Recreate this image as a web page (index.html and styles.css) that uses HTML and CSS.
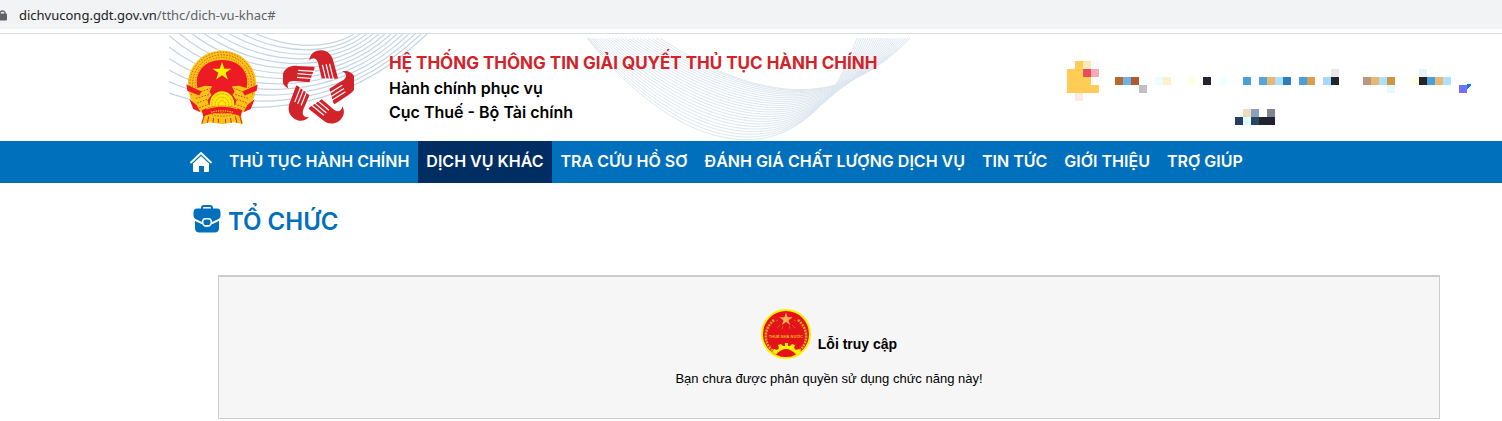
FILE: index.html
```html
<!DOCTYPE html>
<html lang="vi">
<head>
<meta charset="utf-8">
<meta name="viewport" content="width=device-width, initial-scale=1">
<title>Dịch vụ khác</title>
<link rel="stylesheet" href="styles.css">
</head>
<body>
<div class="address-bar">
  <svg class="lock" viewBox="0 0 8 12" aria-hidden="true"><path d="M0 5V3.500A2.800 2.800 0 0 1 5 3.500V5" fill="none" stroke="#5f6368" stroke-width="1.400"/><rect x="-3" y="4.500" width="10" height="7" rx="1" fill="#5f6368"/></svg>
  <span class="url"><span class="url-host">dichvucong.gdt.gov.vn</span>/tthc/dich-vu-khac#</span>
</div>

<header class="header">
  <svg class="waves" viewBox="0 0 745 107" aria-hidden="true">
    <g id="waves-left" fill="none" stroke="#c3d5e5" stroke-width="1.200"></g>
    <svg y="4" width="745" height="103" viewBox="0 4 745 103"><g id="waves-right" fill="none" stroke="#dde7f0" stroke-width="1"></g></svg>
  </svg>

  <svg class="emblem" viewBox="0 0 218 226" role="img" aria-label="Quốc huy Việt Nam">
    <path d="M60 170 46 224l28-6 35 6 36-6 28 6-14-54z" fill="#f6c515"/>
    <path d="M57 192l-9 30M70 194l-5 26M84 198l-2 22M98 200v20M120 200v20M134 198l3 22M148 194l6 26M161 192l8 30" stroke="#e8222b" stroke-width="3"/>
    <circle cx="109" cy="105" r="104" fill="#f7c516"/>
    <circle cx="109" cy="103" r="97" fill="none" stroke="#e4461f" stroke-width="3" stroke-dasharray="4 5"/>
    <circle cx="109" cy="103" r="89" fill="none" stroke="#e4461f" stroke-width="3" stroke-dasharray="5 4"/>
    <circle cx="109" cy="103" r="81" fill="none" stroke="#e4461f" stroke-width="3" stroke-dasharray="3 5"/>
    <path d="M37 122C20 70 55 30 109 30s89 40 72 92l-20 45H57z" fill="#ed1c24"/>
    <path d="M109 36l7 20h21l-17 12 7 21-18-13-18 13 7-21-18-12h22z" fill="#fff200"/>
    <path d="M18 120l40-12 21 1-8 16 6 11-12 16 6 20-33 12L20 156zM200 120l-40-12-21 1 8 16-6 11 12 16-6 20 33 12 18-28z" fill="#f7c516"/>
    <path d="M28 132l44-16M30 146l40-12M34 160l32-12M40 174l28-10M190 132l-44-16M188 146l-40-12M184 160l-32-12M178 174l-28-10" stroke="#e4461f" stroke-width="3" stroke-dasharray="5 4"/>
    <path d="M1 104l46 21-7 12-36-14zM217 104l-46 21 7 12 36-14zM10 148l22 18 12 22-22-10zM208 148l-22 18-12 22 22-10z" fill="#ed1c24"/>
    <path d="M72 170c-3-30 17-46 37-46s40 16 37 46z" fill="#ffe80a"/>
    <path d="M79 170c-2-25 13-38 30-38s32 13 30 38M88 170c-1-18 9-28 21-28s22 10 21 28M97 170c0-11 5-17 12-17s12 6 12 17" fill="none" stroke="#eda515" stroke-width="3" stroke-dasharray="6 2"/>
    <path d="M48 182c40-18 82-18 122 0l-4 18c-38-14-76-14-114 0z" fill="#ed1c24"/>
    <path d="M62 178c32-11 62-11 94 0" fill="none" stroke="#f7c516" stroke-width="3"/>
    <path d="M76 188c22-6 44-6 66 0" fill="none" stroke="#f7c516" stroke-width="4" stroke-dasharray="4 3"/>
  </svg>

  <svg class="hands" viewBox="25 16 209 224" role="img" aria-label="Biểu tượng năm bàn tay">
    <defs>
      <g id="hand">
        <path d="M102 47C104 28 119 16 138 17c20 1 32 15 36 34l13 48-5 2-43-2-8-33c-2-14-6-24-15-26-6 0-10 2-14 7z" fill="#d2232a"/>
        <path d="M152 104l-11-44M163 104l-11-46M174 104l-12-47" stroke="#fff" stroke-width="3.500"/>
      </g>
    </defs>
    <use href="#hand"/>
    <use href="#hand" transform="rotate(72 129 130)"/>
    <use href="#hand" transform="rotate(144 129 130)"/>
    <use href="#hand" transform="rotate(216 129 130)"/>
    <use href="#hand" transform="rotate(288 129 130)"/>
  </svg>

  <div class="titles">
    <h1 class="system-name">HỆ THỐNG THÔNG TIN GIẢI QUYẾT THỦ TỤC HÀNH CHÍNH</h1>
    <p class="agency">Hành chính phục vụ</p>
    <p class="agency">Cục Thuế - Bộ Tài chính</p>
  </div>

  <svg class="account" viewBox="0 0 404 64" shape-rendering="crispEdges" aria-hidden="true">
    <g id="account-mosaic"></g>
    <path d="M400 23h4v2h-1v1h-1v1h-1v1h-1z" fill="#0878ff"/>
  </svg>
</header>

<nav class="nav" aria-label="Menu chính">
  <a class="nav-home" href="#" aria-label="Trang chủ">
    <svg viewBox="0 0 22 22" aria-hidden="true"><path d="M1 11.500 11 2l10 9.500" fill="none" stroke="#fff" stroke-width="1.800" stroke-linecap="round" stroke-linejoin="round"/><path d="M3 12.500 11 5l8 7.500V20q0 1-1 1h-4v-6H9v6H4q-1 0-1-1z" fill="#fff"/></svg>
  </a>
  <a class="nav-link" href="#">THỦ TỤC HÀNH CHÍNH</a>
  <a class="nav-link nav-link-active" href="#" aria-current="page">DỊCH VỤ KHÁC</a>
  <a class="nav-link" href="#">TRA CỨU HỒ SƠ</a>
  <a class="nav-link" href="#">ĐÁNH GIÁ CHẤT LƯỢNG DỊCH VỤ</a>
  <a class="nav-link" href="#">TIN TỨC</a>
  <a class="nav-link" href="#">GIỚI THIỆU</a>
  <a class="nav-link" href="#">TRỢ GIÚP</a>
</nav>

<main class="content">
  <div class="section-head">
    <svg class="briefcase" viewBox="0 0 28 28" aria-hidden="true">
      <path d="M9 4V3q0-2 2-2h6q2 0 2 2v1" fill="none" stroke="#0070bd" stroke-width="2"/>
      <path d="M4 3.500h20q3.500 0 3.500 4V11q0 2-2 3l-6.500 3q0-4-3-4h-4q-3 0-3 4L2.500 14q-2-1-2-3V7.500q0-4 3.500-4z" fill="#0070bd"/>
      <path d="M2 16l7.500 3.500Q10.500 22 14 22t4.500-2.500L26 16v7q0 4.500-4.500 4.500h-15Q2 27.500 2 23z" fill="#0070bd"/>
      <rect x="10.500" y="14.500" width="7" height="5.500" rx="2" fill="#0070bd"/>
    </svg>
    <h2 class="section-title">TỔ CHỨC</h2>
  </div>

  <section class="panel">
    <div class="error-head">
      <svg class="seal" viewBox="0 0 50 50" role="img" aria-label="Thuế Nhà nước">
        <circle cx="25" cy="25" r="24" fill="#e3121b" stroke="#fff200" stroke-width="2"/>
        <path d="M13 11C1 21 3 37 14 43M37 11c12 10 10 26-1 32" fill="none" stroke="#e9a51d" stroke-width="2.500" stroke-dasharray="2 1"/>
        <path d="M25 3.500l1.600 4.700h5l-4 3 1.500 4.800-4.100-2.900-4.100 2.900 1.500-4.800-4-3h5z" fill="#ffb052"/>
        <path d="M19 16l-3 3M31 16l3 3M22 17l-1 3M28 17l1 3M17 11l-2 1M33 11l2 1" stroke="#d97a20" stroke-width=".7"/>
        <text class="seal-text" x="25" y="29" text-anchor="middle">THUẾ NHÀ NƯỚC</text>
        <path d="M11 43l2-3 3 1 2-2-1-3 3-1 2 2h2v-3h3v3h2l2-2 3 1-1 3 2 2 3-1 2 3q-6 4.500-14.500 4.500T11 43z" fill="#fff200"/>
        <path d="M15 45.500q10-11 20 0-10 5-20 0z" fill="#e3121b"/>
      </svg>
      <strong class="error-title">Lỗi truy cập</strong>
    </div>
    <p class="error-text">Bạn chưa được phân quyền sử dụng chức năng này!</p>
  </section>
</main>
<script src="script.js"></script>
</body>
</html>
```
FILE: styles.css
```css
* {
  box-sizing: border-box;
}

body {
  margin: 0;
  background: #fff;
  color: #000;
  font-family: Inter, "Liberation Sans", sans-serif;
}

h1, h2, p {
  margin: 0;
}

.address-bar {
  display: flex;
  align-items: center;
  gap: 11px;
  height: 34px;
  padding-bottom: 3px;
  border-bottom: 1px solid #dadce0;
  background: linear-gradient(#f1f3f4 29px, #fff 29px);
}

.lock {
  width: 8px;
  height: 12px;
}

.url {
  color: #5f6368;
  font-family: "Noto Sans", "Open Sans", sans-serif;
  font-size: 13px;
  line-height: 20px;
}

.url-host {
  color: #202124;
}

.header {
  position: relative;
  display: flex;
  align-items: flex-start;
  min-height: 107px;
  padding: 16px 31px 0 186px;
}

.waves {
  position: absolute;
  top: 0;
  left: 169px;
  z-index: -1;
  width: 745px;
  height: 107px;
}

.emblem {
  flex: none;
  width: 72px;
  height: 75px;
}

.hands {
  flex: none;
  width: 71px;
  height: 76px;
  margin-left: 25px;
}

.titles {
  margin-left: 35px;
  white-space: nowrap;
}

.system-name {
  color: #d2232a;
  font-size: 17px;
  font-weight: 700;
  line-height: 26px;
}

.agency {
  font-size: 16px;
  font-weight: 600;
  line-height: 24px;
}

.account {
  flex: none;
  width: 404px;
  height: 64px;
  margin-top: 11px;
  margin-left: auto;
}

.nav {
  display: flex;
  align-items: center;
  gap: 1px;
  padding-left: 190px;
  background: #0070bd;
}

.nav-home {
  display: flex;
  margin-right: 8px;
}

.nav-home svg {
  width: 22px;
  height: 22px;
}

.nav-link {
  padding: 8px 8px 10px;
  color: #fff;
  font-size: 16px;
  font-weight: 600;
  line-height: 24px;
  text-decoration: none;
  white-space: nowrap;
}

.nav-link-active {
  background: #002d62;
}

.content {
  padding: 20px 62px 0 193px;
}

.section-head {
  display: flex;
  align-items: flex-start;
  gap: 7px;
}

.briefcase {
  width: 28px;
  height: 28px;
  margin-top: 2px;
}

.section-title {
  padding-top: 3px;
  color: #0070bd;
  font-size: 24px;
  font-weight: 600;
  line-height: 32px;
}

.panel {
  margin-top: 37px;
  margin-left: 25px;
  padding: 32px 16px 30px;
  border: 1px solid #ccc;
  border-top-width: 2px;
  background: #f6f6f6;
  font-family: "Liberation Sans", Arial, sans-serif;
  text-align: center;
}

.error-head {
  display: flex;
  align-items: flex-end;
  justify-content: center;
  gap: 7px;
}

.seal {
  width: 50px;
  height: 50px;
}

.seal-text {
  fill: #f7b21c;
  font-family: "Liberation Sans", Arial, sans-serif;
  font-size: 4px;
  font-weight: 700;
}

.error-title {
  padding-bottom: 6px;
  font-size: 14px;
  line-height: 18px;
}

.error-text {
  margin-top: 11px;
  font-size: 13px;
  line-height: 18px;
}
```
FILE: script.js
```js
const SVG_NS = "http://www.w3.org/2000/svg";

function add(parent, tag, attrs) {
  const node = document.createElementNS(SVG_NS, tag);
  for (const name in attrs) node.setAttribute(name, attrs[name]);
  document.getElementById(parent).appendChild(node);
}

// Contour lines behind the logos
for (let k = 0; k < 13; k++) {
  add("waves-left", "path", {
    d: `M0 ${59 - 11.5 * k}C60 ${80 - 5 * k} 165 ${90 - 5 * k} ${258 - 5 * k} ${-k}`
  });
}

// Ribbon of lines behind the title
const outer = [418, 4, 521, 134, 641, 145, 688, 4];
const inner = [491, 4, 571, 57, 664, 87, 741, 4];
const LINES = 24;
for (let k = 0; k <= LINES; k++) {
  const u = k / LINES;
  const p = outer.map((v, i) => {
    const bend = i < 2 ? u ** 1.4 : i > 5 ? u : 1 - (1 - u) ** 1.3;
    return (v + (inner[i] - v) * bend).toFixed(1);
  });
  add("waves-right", "path", {
    d: `M${p[0]} ${p[1]}C${p[2]} ${p[3]} ${p[4]} ${p[5]} ${p[6]} ${p[7]}`
  });
}

// Account area, pixelated for privacy: row -> [column, colours...]
const CELL = 8;
const mosaic = [
  [0, 1, "ffcc55", "ffe8b8", "fff9f9"],
  [1, 0, "ffcc55", "ffcc55", "e64c5c", "f4abb4"],
  [1, 33, "e9e9e9"], [1, 44, "e8f1f8"],
  [2, 0, "ffcc55", "ffcc55", "ffcc55"],
  [2, 6, "b4692f", "68b4e8", "af592f"],
  [2, 11, "e8ffff", "fff0c8"], [2, 15, "ffffe3"], [2, 17, "25242f"],
  [2, 19, "f0ffff"], [2, 22, "4a9edc"],
  [2, 24, "58a4dc", "e8b873", "abe1ff", "2d7bc0"],
  [2, 29, "4a9edc", "d69f50"], [2, 32, "a2dbff", "22252a"],
  [2, 37, "ba9880", "e8b873", "abe1ff", "cc9741"],
  [2, 43, "ffffe3", "262326", "4a9edc", "e8b873", "abe1ff"],
  [3, 0, "ffcc55", "ffcc55", "ffcc55", "ffcc55"],
  [3, 9, "c0c1c3"], [3, 40, "e8f8ff"], [3, 49, "706fff"],
  [4, 1, "fde8e2"],
  [6, 21, "fffff8", "ecdcc0", "8b9fc0"], [6, 25, "82848f"],
  [7, 21, "273f60", "e0ffff", "284762", "22252a", "20223a"]
];
for (const [row, column, ...colours] of mosaic) {
  colours.forEach((colour, i) => add("account-mosaic", "rect", {
    x: (column + i) * CELL, y: row * CELL, width: CELL, height: CELL, fill: "#" + colour
  }));
}
```
